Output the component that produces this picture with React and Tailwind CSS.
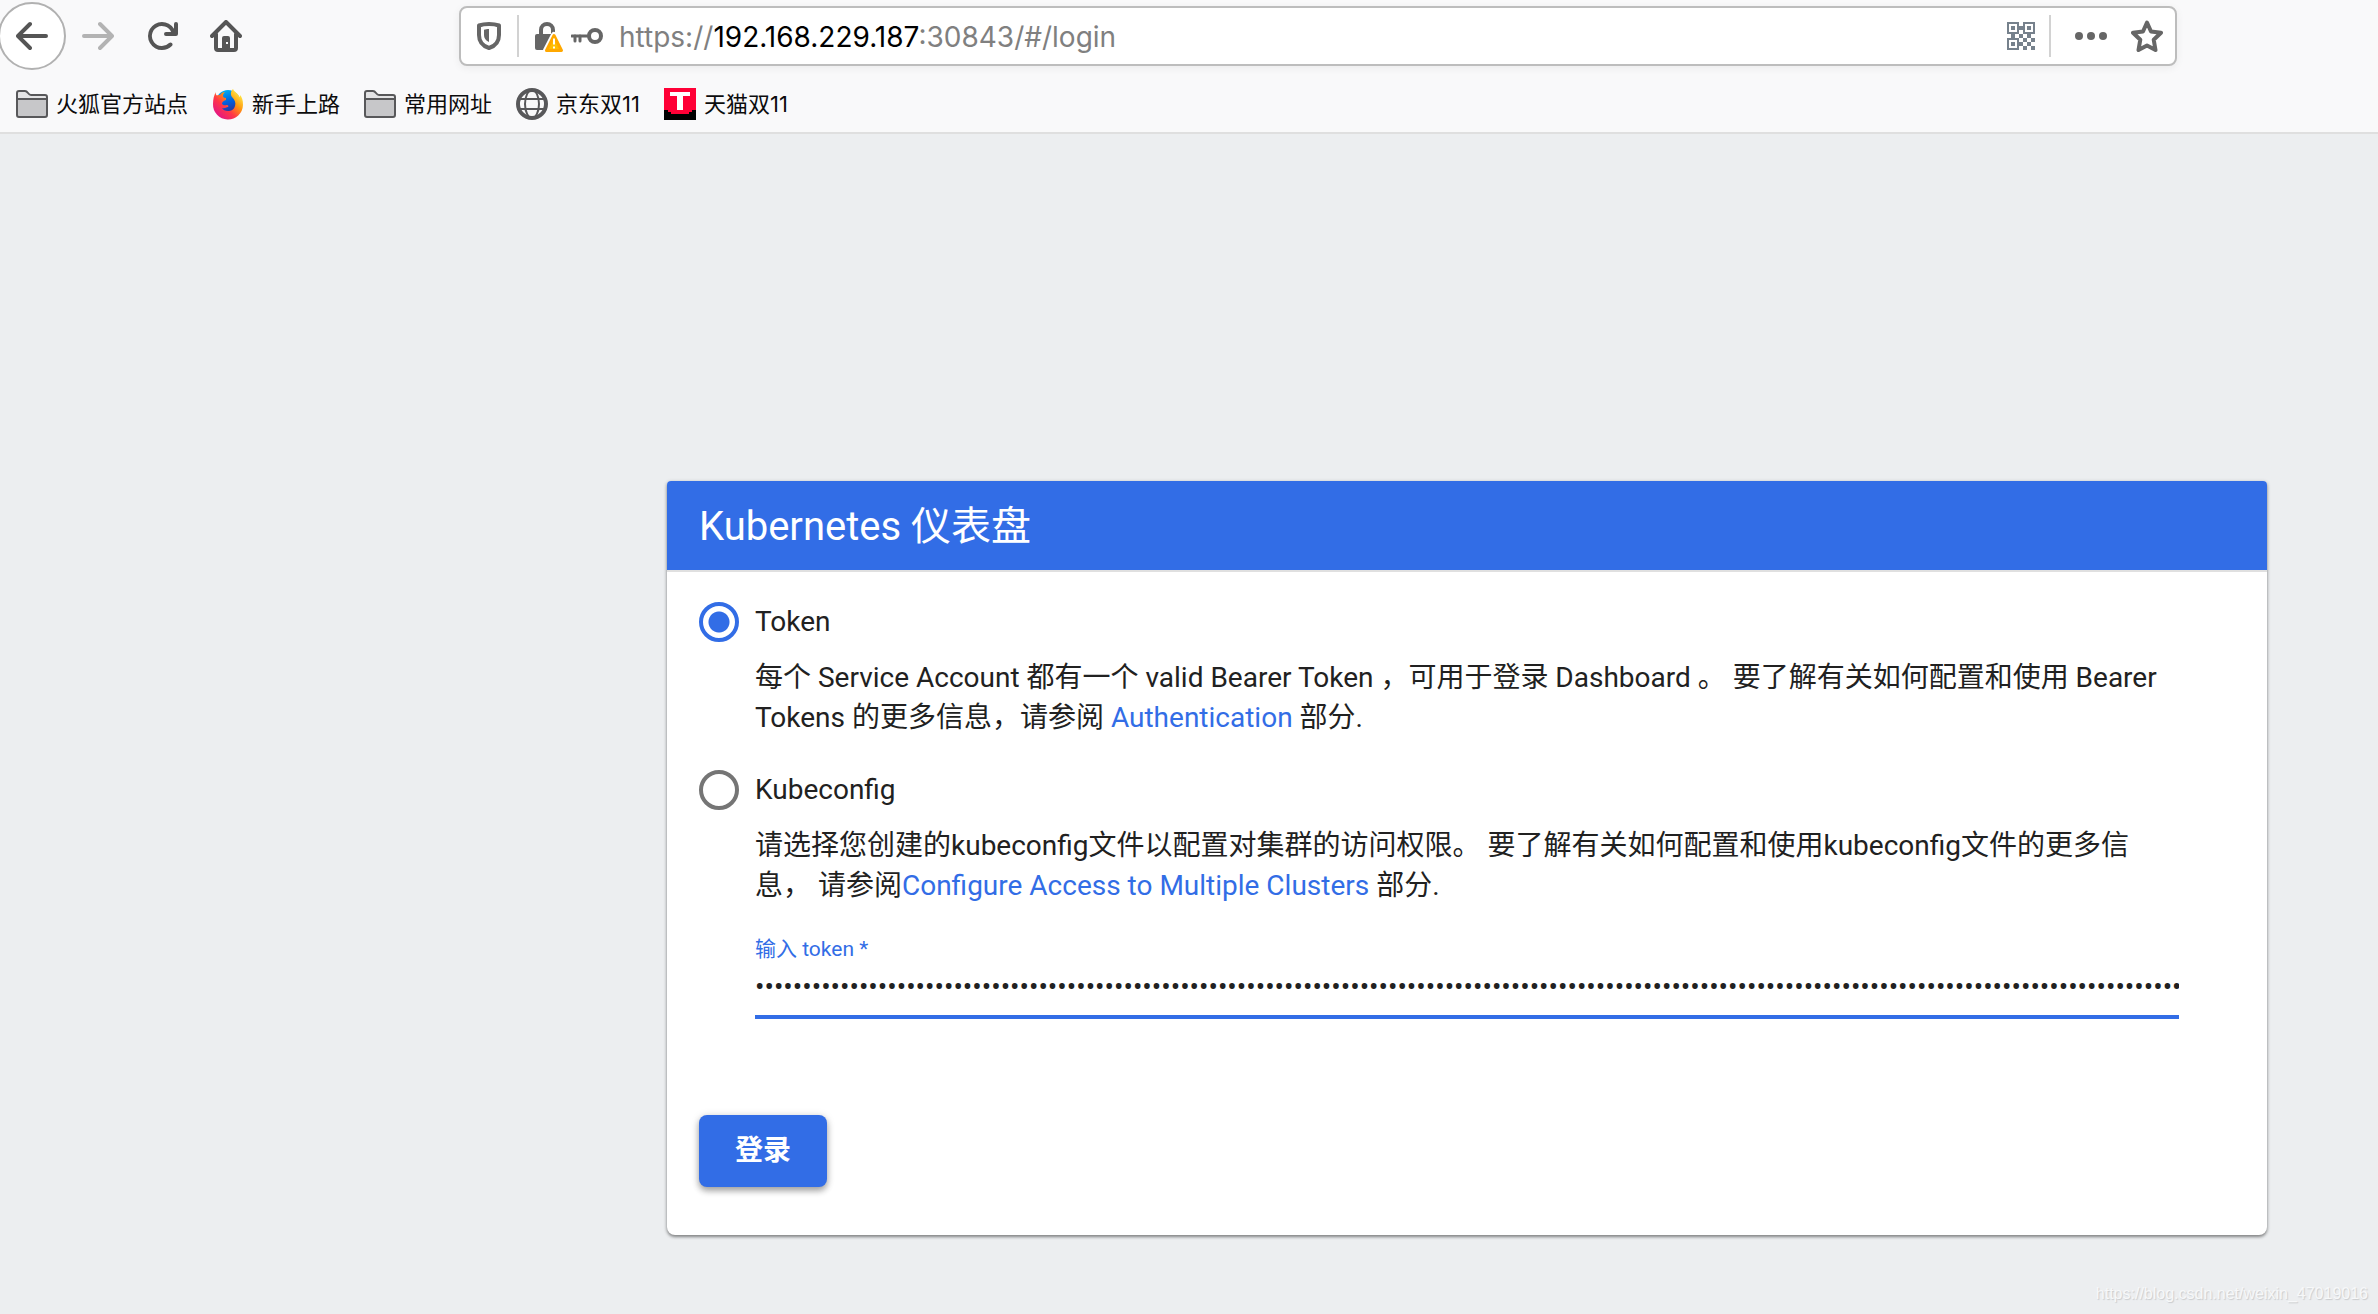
import { useState } from "react";

const sampleToken = "k8s0".repeat(40).slice(0, 151);

const bookmarks = [
  { label: "火狐官方站点", icon: FolderIcon },
  { label: "新手上路", icon: FirefoxIcon },
  { label: "常用网址", icon: FolderIcon },
  { label: "京东双11", icon: GlobeIcon },
  { label: "天猫双11", icon: TmallIcon },
];

function BackIcon({ className }) {
  return (
    <svg className={className} viewBox="0 0 16 16" fill="currentColor">
      <path d="M15 7H3.414l4.293-4.293a1 1 0 0 0-1.414-1.414l-6 6a1 1 0 0 0 0 1.414l6 6a1 1 0 0 0 1.414-1.414L3.414 9H15a1 1 0 0 0 0-2z" />
    </svg>
  );
}

function ReloadIcon() {
  return (
    <svg className="size-8" viewBox="0 0 16 16" fill="currentColor">
      <path d="M15 1a1 1 0 0 0-1 1v2.418A6.995 6.995 0 1 0 8 15a6.954 6.954 0 0 0 4.95-2.05 1 1 0 0 0-1.414-1.414A5.019 5.019 0 1 1 12.549 6H10a1 1 0 0 0 0 2h5a1 1 0 0 0 1-1V2a1 1 0 0 0-1-1z" />
    </svg>
  );
}

function HomeIcon() {
  return (
    <svg className="size-8" viewBox="0 0 16 16">
      <path
        d="M1 8l7-7 7 7M3 7v7a1 1 0 0 0 1 1h8a1 1 0 0 0 1-1V7"
        fill="none"
        stroke="currentColor"
        strokeWidth="2"
        strokeLinecap="round"
        strokeLinejoin="round"
      />
      <path
        d="M7 8h2a1 1 0 0 1 1 1v6H6V9a1 1 0 0 1 1-1zm1 3v1h1v-1z"
        fill="currentColor"
        fillRule="evenodd"
      />
    </svg>
  );
}

function ShieldIcon() {
  return (
    <svg className="size-8" viewBox="0 0 32 32">
      <path
        d="M16 4c4 0 7.500.6 10 1.500V15c0 6-3.500 11-10 13C9.500 26 6 21 6 15V5.500C8.500 4.600 12 4 16 4z"
        fill="none"
        stroke="currentColor"
        strokeWidth="4"
        strokeLinejoin="round"
      />
      <path d="M16 9c-2 0-3.500.3-5 .8V15c0 3 1.500 5.500 5 7z" fill="currentColor" />
    </svg>
  );
}

function InsecureLockIcon() {
  return (
    <svg className="size-8" viewBox="0 0 32 32">
      <path
        d="M8 16v-6a6 6 0 0 1 12 0v6"
        fill="none"
        stroke="currentColor"
        strokeWidth="4"
      />
      <path d="M4 14h20v16H4a2 2 0 0 1-2-2V16a2 2 0 0 1 2-2z" fill="currentColor" />
      <path
        d="M21 15l8 15.500H13z"
        fill="#fff"
        stroke="#fff"
        strokeWidth="6"
        strokeLinejoin="round"
      />
      <path
        d="M21 15.500l7.500 15H13.500z"
        fill="#ffbf00"
        stroke="#ffa800"
        strokeWidth="3"
        strokeLinejoin="round"
      />
      <path d="M21 18.500v6M21 26.500v2" stroke="#fff" strokeWidth="2" />
    </svg>
  );
}

function KeyIcon() {
  return (
    <svg className="size-8" viewBox="0 0 32 32" fill="none" stroke="currentColor">
      <circle cx="24" cy="16" r="6" strokeWidth="4" />
      <path d="M1 16h17" strokeWidth="3" strokeLinecap="round" />
      <path d="M4 16v5M9 16v5" strokeWidth="3" strokeLinecap="round" />
    </svg>
  );
}

function QrIcon() {
  return (
    <svg className="size-7" viewBox="0 0 14 14" fill="#76818c">
      <path
        fillRule="evenodd"
        d="M0 0h6v6H0zM1 1v4h4V1zM8 0h6v6H8zM9 1v4h4V1zM0 8h6v6H0zM1 9v4h4V9z"
      />
      <path d="M2 2h2v2H2zM10 2h2v2h-2zM2 10h2v2H2zM6 2h2v2H6zM2 6h2v2H2zM6 6h2v2H6zM10 6h2v2h-2zM8 8h2v2H8zM12 8h2v2h-2zM6 10h2v2H6zM10 10h2v2h-2zM8 12h2v2H8zM12 12h2v2h-2z" />
    </svg>
  );
}

function DotsIcon() {
  return (
    <svg className="size-8" viewBox="0 0 16 16" fill="currentColor">
      <circle cx="2" cy="8" r="2" />
      <circle cx="8" cy="8" r="2" />
      <circle cx="14" cy="8" r="2" />
    </svg>
  );
}

function StarIcon() {
  return (
    <svg className="size-8" viewBox="0 0 32 32" fill="none" stroke="currentColor">
      <path
        d="M16 2.500l4 9 10 1.200-7.300 7 1.800 10.300L16 25.500 7.500 30l1.800-10.300-7.300-7L12 11.500z"
        strokeWidth="4"
        strokeLinejoin="round"
      />
    </svg>
  );
}

function FolderIcon() {
  return (
    <svg className="size-8" viewBox="0 0 32 32">
      <path
        d="M1 27V5a2 2 0 0 1 2-2h6c3 0 3 4 6 4h14a2 2 0 0 1 2 2v18a2 2 0 0 1-2 2H3a2 2 0 0 1-2-2z"
        fill="#e4e4e5"
      />
      <path d="M1 11h30v16a2 2 0 0 1-2 2H3a2 2 0 0 1-2-2z" fill="#c7c7c9" />
      <path
        d="M1 27V5a2 2 0 0 1 2-2h6c3 0 3 4 6 4h14a2 2 0 0 1 2 2v18a2 2 0 0 1-2 2H3a2 2 0 0 1-2-2zM1 11h30"
        fill="none"
        stroke="#58585a"
        strokeWidth="2"
      />
    </svg>
  );
}

function FirefoxIcon() {
  return (
    <svg className="size-8" viewBox="0 0 32 32">
      <defs>
        <linearGradient id="fox-body" x1="0.900" y1="0.100" x2="0.150" y2="0.900">
          <stop offset="0" stopColor="#fff44f" />
          <stop offset="0.350" stopColor="#ff980e" />
          <stop offset="0.650" stopColor="#ff3647" />
          <stop offset="1" stopColor="#e31587" />
        </linearGradient>
        <linearGradient id="fox-globe" x1="0.300" y1="0" x2="0.600" y2="1">
          <stop offset="0" stopColor="#00b3f4" />
          <stop offset="0.500" stopColor="#0060df" />
          <stop offset="1" stopColor="#362b8c" />
        </linearGradient>
      </defs>
      <circle cx="16" cy="14" r="12" fill="url(#fox-globe)" />
      <path
        d="M4 4c-2 3-3 7-3 12a15 15 0 0 0 30 1c0-5-1-8-3-10 0 1 0 2-.5 2C26 5 22 4 21 1c-2 2-3 5-1 8 3 3 4 6 3 9-1 4-4 5-7 5-3 0-5-1-6-3 3 1 4-1 6-1 1-1 0-2-1-2-2 0-3 1-5-1 0-2 1-3 4-4v-2c-2 0-3-1-3-2 0-2 1-3 2-4-2 0-4 1-5 3-1 0-2 0-3 .5C4 7 3.500 6 4 4z"
        fill="url(#fox-body)"
      />
    </svg>
  );
}

function GlobeIcon() {
  return (
    <svg className="size-8" viewBox="0 0 32 32" fill="none" stroke="#58585a">
      <circle cx="16" cy="16" r="14" strokeWidth="4" />
      <ellipse cx="16" cy="16" rx="7" ry="14" strokeWidth="2" />
      <path d="M3 11h26M3 21h26" strokeWidth="2" />
    </svg>
  );
}

function TmallIcon() {
  return (
    <svg className="size-8" viewBox="0 0 32 32">
      <path d="M0 0h32v32H0z" fill="#ff0036" />
      <path d="M0 22h4v2h3v2h18v-2h3v-2h4v10H0z" fill="#000" />
      <path d="M6 4h20v4h-7v14h-6V8H6z" fill="#fff" />
    </svg>
  );
}

function BrowserToolbar() {
  return (
    <header className="border-b-2 border-[#dfdfdf] bg-[#f9f9fa] text-[#555]">
      <div className="flex h-18 items-center">
        <nav className="flex w-[459px] shrink-0 items-center">
          <button
            type="button"
            aria-label="后退"
            className="-ml-0.5 flex size-[68px] items-center justify-center rounded-full border-2 border-[#b1b1b1] bg-white"
          >
            <BackIcon className="size-8" />
          </button>
          <button type="button" aria-label="前进" className="ml-4 text-[#b3b3b3]">
            <BackIcon className="size-8 rotate-180" />
          </button>
          <button type="button" aria-label="刷新" className="ml-8">
            <ReloadIcon />
          </button>
          <button type="button" aria-label="主页" className="ml-8">
            <HomeIcon />
          </button>
        </nav>

        <div className="mr-[201px] flex h-[60px] flex-1 items-center rounded-lg border-2 border-[#bdbdbd] bg-white px-3 text-[#666] shadow-[0_2px_8px_rgba(0,0,0,0.06)]">
          <ShieldIcon />
          <span className="mx-3 h-[42px] w-0.5 bg-[#d2d2d2]" />
          <div className="flex items-center gap-1.5 pl-0.5">
            <InsecureLockIcon />
            <KeyIcon />
          </div>
          <p className="ml-4 flex-1 pt-0.5 font-['Inter','Liberation_Sans',sans-serif] text-[28px] leading-9 text-[#808080]">
            https://<span className="text-black">192.168.229.187</span>:30843/#/login
          </p>
          <button type="button" aria-label="二维码">
            <QrIcon />
          </button>
          <span className="mr-6 ml-3.5 h-[42px] w-0.5 bg-[#d2d2d2]" />
          <button type="button" aria-label="更多操作">
            <DotsIcon />
          </button>
          <button type="button" aria-label="添加书签" className="ml-6">
            <StarIcon />
          </button>
        </div>
      </div>

      <nav className="flex h-15 items-center gap-6 px-4 pt-1 font-['Inter','Noto_Sans_CJK_SC',sans-serif] text-[22px] leading-8 text-[#0c0c0d]">
        {bookmarks.map(({ label, icon: Icon }) => (
          <a key={label} href="#" className="flex items-center gap-2">
            <Icon />
            {label}
          </a>
        ))}
      </nav>
    </header>
  );
}

function LoginOption({ value, title, checked, onChange, children }) {
  return (
    <div>
      <label className="flex items-center gap-4">
        <input
          type="radio"
          name="mode"
          value={value}
          checked={checked}
          onChange={onChange}
          className="size-10 appearance-none rounded-full border-4 border-[#757575] checked:border-[#326de6] checked:bg-[radial-gradient(circle,#326de6_10px,transparent_11px)]"
        />
        {title}
      </label>
      <p className="mt-4 px-14">{children}</p>
    </div>
  );
}

export default function App() {
  const [mode, setMode] = useState("token");
  const [token, setToken] = useState(sampleToken);

  function handleSubmit(event) {
    event.preventDefault();
  }

  return (
    <div className="relative flex min-h-screen flex-col bg-[#eceef0]">
      <BrowserToolbar />

      <main className="flex-1 pt-[347px] pr-[111px] pb-[78px] pl-[667px] font-['Roboto','Noto_Sans_CJK_SC',sans-serif] text-[28px] leading-10 text-[#212121]">
        <section className="rounded-t-sm rounded-b-lg bg-white shadow-[0_2px_3px_rgba(0,0,0,0.35),0_1px_4px_rgba(0,0,0,0.2)]">
          <h1 className="rounded-t-sm border-b-2 border-[#e0e0e0] bg-[#326de6] px-8 pt-[26px] pb-[23px] text-[40px] leading-10 text-white">
            Kubernetes 仪表盘
          </h1>

          <form className="px-8 pt-[30px] pb-12" onSubmit={handleSubmit}>
            <div className="space-y-8">
              <LoginOption
                value="token"
                title="Token"
                checked={mode === "token"}
                onChange={() => setMode("token")}
              >
                每个 Service Account 都有一个 valid Bearer Token ，可用于登录
                Dashboard 。 要了解有关如何配置和使用 Bearer Tokens
                的更多信息，请参阅{" "}
                <a href="#" className="text-[#326de6]">
                  Authentication
                </a>{" "}
                部分.
              </LoginOption>

              <LoginOption
                value="kubeconfig"
                title="Kubeconfig"
                checked={mode === "kubeconfig"}
                onChange={() => setMode("kubeconfig")}
              >
                请选择您创建的kubeconfig文件以配置对集群的访问权限。
                要了解有关如何配置和使用kubeconfig文件的更多信息， 请参阅
                <a href="#" className="text-[#326de6]">
                  Configure Access to Multiple Clusters
                </a>{" "}
                部分.
              </LoginOption>
            </div>

            <div className="mx-14 mt-[29px]">
              <label
                htmlFor="token"
                className="block text-[21px] leading-7 text-[#326de6]"
              >
                输入 token *
              </label>
              <input
                id="token"
                type="password"
                value={token}
                onChange={(event) => setToken(event.target.value)}
                className="mt-1 block w-full border-b-4 border-[#326de6] pb-2 outline-none"
              />
            </div>

            <button
              type="submit"
              className="mt-24 h-18 w-32 rounded-lg bg-[#326de6] font-bold text-white shadow-[0_4px_6px_rgba(0,0,0,0.3),0_1px_8px_rgba(0,0,0,0.15)]"
            >
              登录
            </button>
          </form>
        </section>
      </main>

      <p className="absolute right-2.5 bottom-2 font-['Liberation_Sans',sans-serif] text-base text-[#f7f8f9] [text-shadow:1px_1px_1px_#c9cbcd]">
        https://blog.csdn.net/weixin_47019016
      </p>
    </div>
  );
}
